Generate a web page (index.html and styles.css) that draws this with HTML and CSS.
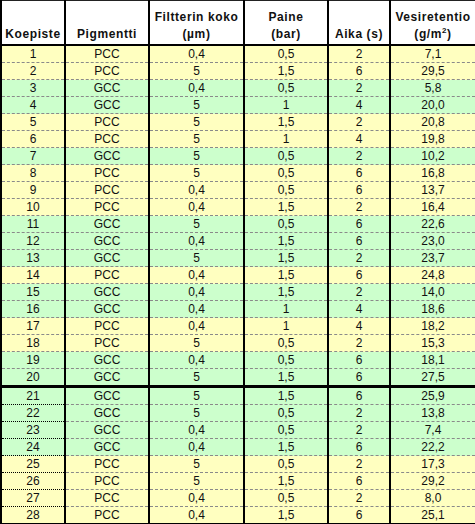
FILE: index.html
```html
<!DOCTYPE html>
<html>
<head>
<meta charset="utf-8">
<link rel="stylesheet" href="styles.css">
</head>
<body>
<table class="sheet">
  <colgroup>
    <col class="c1"><col class="c2"><col class="c3"><col class="c4"><col class="c5"><col class="c6">
  </colgroup>
  <thead>
    <tr class="head">
      <th>Koepiste</th>
      <th>Pigmentti</th>
      <th>Filtterin koko<br>(µm)</th>
      <th>Paine<br>(bar)</th>
      <th>Aika (s)</th>
      <th>Vesiretentio<br>(g/m<sup>2</sup>)</th>
    </tr>
  </thead>
  <tbody>
    <tr class="p"><td>1</td><td>PCC</td><td>0,4</td><td>0,5</td><td>2</td><td>7,1</td></tr>
    <tr class="p"><td>2</td><td>PCC</td><td>5</td><td>1,5</td><td>6</td><td>29,5</td></tr>
    <tr class="g"><td>3</td><td>GCC</td><td>0,4</td><td>0,5</td><td>2</td><td>5,8</td></tr>
    <tr class="g"><td>4</td><td>GCC</td><td>5</td><td>1</td><td>4</td><td>20,0</td></tr>
    <tr class="p"><td>5</td><td>PCC</td><td>5</td><td>1,5</td><td>2</td><td>20,8</td></tr>
    <tr class="p"><td>6</td><td>PCC</td><td>5</td><td>1</td><td>4</td><td>19,8</td></tr>
    <tr class="g"><td>7</td><td>GCC</td><td>5</td><td>0,5</td><td>2</td><td>10,2</td></tr>
    <tr class="p"><td>8</td><td>PCC</td><td>5</td><td>0,5</td><td>6</td><td>16,8</td></tr>
    <tr class="p"><td>9</td><td>PCC</td><td>0,4</td><td>0,5</td><td>6</td><td>13,7</td></tr>
    <tr class="p"><td>10</td><td>PCC</td><td>0,4</td><td>1,5</td><td>2</td><td>16,4</td></tr>
    <tr class="g"><td>11</td><td>GCC</td><td>5</td><td>0,5</td><td>6</td><td>22,6</td></tr>
    <tr class="g"><td>12</td><td>GCC</td><td>0,4</td><td>1,5</td><td>6</td><td>23,0</td></tr>
    <tr class="g"><td>13</td><td>GCC</td><td>5</td><td>1,5</td><td>2</td><td>23,7</td></tr>
    <tr class="p"><td>14</td><td>PCC</td><td>0,4</td><td>1,5</td><td>6</td><td>24,8</td></tr>
    <tr class="g"><td>15</td><td>GCC</td><td>0,4</td><td>1,5</td><td>2</td><td>14,0</td></tr>
    <tr class="g"><td>16</td><td>GCC</td><td>0,4</td><td>1</td><td>4</td><td>18,6</td></tr>
    <tr class="p"><td>17</td><td>PCC</td><td>0,4</td><td>1</td><td>4</td><td>18,2</td></tr>
    <tr class="p"><td>18</td><td>PCC</td><td>5</td><td>0,5</td><td>2</td><td>15,3</td></tr>
    <tr class="g"><td>19</td><td>GCC</td><td>0,4</td><td>0,5</td><td>6</td><td>18,1</td></tr>
    <tr class="g last1"><td>20</td><td>GCC</td><td>5</td><td>1,5</td><td>6</td><td>27,5</td></tr>
    <tr class="g b2"><td>21</td><td>GCC</td><td>5</td><td>1,5</td><td>6</td><td>25,9</td></tr>
    <tr class="g b2"><td>22</td><td>GCC</td><td>5</td><td>0,5</td><td>2</td><td>13,8</td></tr>
    <tr class="g b2"><td>23</td><td>GCC</td><td>0,4</td><td>0,5</td><td>2</td><td>7,4</td></tr>
    <tr class="g b2"><td>24</td><td>GCC</td><td>0,4</td><td>1,5</td><td>6</td><td>22,2</td></tr>
    <tr class="p b2"><td>25</td><td>PCC</td><td>5</td><td>0,5</td><td>2</td><td>17,3</td></tr>
    <tr class="p b2"><td>26</td><td>PCC</td><td>5</td><td>1,5</td><td>6</td><td>29,2</td></tr>
    <tr class="p b2"><td>27</td><td>PCC</td><td>0,4</td><td>0,5</td><td>2</td><td>8,0</td></tr>
    <tr class="p b2 end"><td>28</td><td>PCC</td><td>0,4</td><td>1,5</td><td>6</td><td>25,1</td></tr>
  </tbody>
</table>
</body>
</html>
```
FILE: styles.css
```css
html, body {
  margin: 0;
  padding: 0;
  background: #ffffff;
}

.sheet {
  border-collapse: collapse;
  table-layout: fixed;
  width: 475px;
  font-family: "Liberation Sans", Arial, sans-serif;
  font-size: 12px;
  color: #111111;
}

.c1 { width: 64px; }
.c2 { width: 84px; }
.c3 { width: 95px; }
.c4 { width: 84px; }
.c5 { width: 62px; }
.c6 { width: 86px; }

.sheet th,
.sheet td {
  border-left: 2px solid #000000;
  border-right: 2px solid #000000;
  text-align: center;
  padding: 0;
}

.head th {
  height: 42px;
  vertical-align: bottom;
  font-weight: bold;
  letter-spacing: 0.6px;
  line-height: 17px;
  padding-bottom: 1px;
  border-top: 1px solid #222222;
  border-bottom: 2px solid #000000;
  background: #ffffff;
}

.head sup {
  font-size: 8px;
  line-height: 0;
  vertical-align: 5px;
}

.sheet td {
  height: 16px;
  line-height: 16px;
  border-bottom: 1px dashed #8a8a8a;
}

.sheet tr.p td { background: #ffffc0; }
.sheet tr.g td { background: #ccffcc; }

.sheet tr.last1 td {
  border-bottom: 3px solid #000000;
}

.sheet tr.b2 td:first-child {
  border-bottom: 1px dotted #000000;
}

.sheet tr.end td,
.sheet tr.end td:first-child {
  border-bottom: 2px solid #000000;
}
```
